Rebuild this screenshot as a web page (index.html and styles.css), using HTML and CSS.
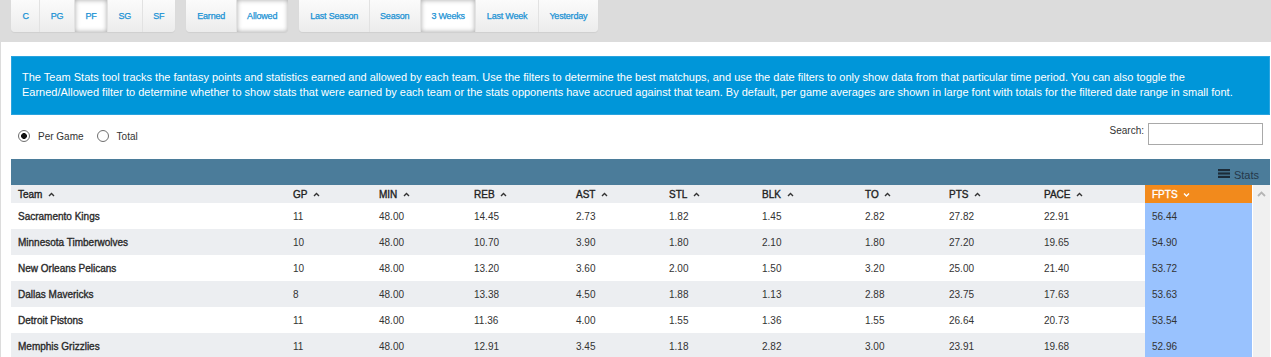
FILE: index.html
```html
<!DOCTYPE html>
<html>
<head>
<meta charset="utf-8">
<link rel="stylesheet" href="styles.css">
</head>
<body>
<div class="topbar">
  <div class="btn-group">
    <span class="btn">C</span><span class="btn">PG</span><span class="btn active">PF</span><span class="btn">SG</span><span class="btn">SF</span>
  </div>
  <div class="btn-group">
    <span class="btn">Earned</span><span class="btn active">Allowed</span>
  </div>
  <div class="btn-group">
    <span class="btn">Last Season</span><span class="btn">Season</span><span class="btn active">3 Weeks</span><span class="btn">Last Week</span><span class="btn">Yesterday</span>
  </div>
</div>
<div class="panel">
  <div class="info">The Team Stats tool tracks the fantasy points and statistics earned and allowed by each team. Use the filters to determine the best matchups, and use the date filters to only show data from that particular time period. You can also toggle the Earned/Allowed filter to determine whether to show stats that were earned by each team or the stats opponents have accrued against that team. By default, per game averages are shown in large font with totals for the filtered date range in small font.</div>
  <div class="controls">
    <div class="radios">
      <label class="radio"><input type="radio" name="mode" checked><span>Per Game</span></label>
      <label class="radio"><input type="radio" name="mode"><span>Total</span></label>
    </div>
    <label class="search"><span>Search:</span><input type="text"></label>
  </div>
  <div class="table-bar">
    <span class="stats-toggle"><svg class="burger" width="12" height="9" viewBox="0 0 12 9"><rect x="0" y="0" width="12" height="2.2"/><rect x="0" y="3.4" width="12" height="2.2"/><rect x="0" y="6.8" width="12" height="2.2"/></svg>Stats</span>
  </div>
  <div class="table-wrap">
    <table class="stats">
      <colgroup>
        <col class="w-team"><col class="w-gp"><col class="w-min"><col class="w-reb"><col class="w-ast"><col class="w-stl"><col class="w-blk"><col class="w-to"><col class="w-pts"><col class="w-pace"><col class="w-fpts">
      </colgroup>
      <thead>
        <tr>
          <th>Team <svg class="caret" width="7" height="5" viewBox="0 0 7 5"><polyline points="1,4 3.5,1.5 6,4"/></svg></th>
          <th>GP <svg class="caret" width="7" height="5" viewBox="0 0 7 5"><polyline points="1,4 3.5,1.5 6,4"/></svg></th>
          <th>MIN <svg class="caret" width="7" height="5" viewBox="0 0 7 5"><polyline points="1,4 3.5,1.5 6,4"/></svg></th>
          <th>REB <svg class="caret" width="7" height="5" viewBox="0 0 7 5"><polyline points="1,4 3.5,1.5 6,4"/></svg></th>
          <th>AST <svg class="caret" width="7" height="5" viewBox="0 0 7 5"><polyline points="1,4 3.5,1.5 6,4"/></svg></th>
          <th>STL <svg class="caret" width="7" height="5" viewBox="0 0 7 5"><polyline points="1,4 3.5,1.5 6,4"/></svg></th>
          <th>BLK <svg class="caret" width="7" height="5" viewBox="0 0 7 5"><polyline points="1,4 3.5,1.5 6,4"/></svg></th>
          <th>TO <svg class="caret" width="7" height="5" viewBox="0 0 7 5"><polyline points="1,4 3.5,1.5 6,4"/></svg></th>
          <th>PTS <svg class="caret" width="7" height="5" viewBox="0 0 7 5"><polyline points="1,4 3.5,1.5 6,4"/></svg></th>
          <th>PACE <svg class="caret" width="7" height="5" viewBox="0 0 7 5"><polyline points="1,4 3.5,1.5 6,4"/></svg></th>
          <th class="sorted">FPTS <svg class="caret" width="7" height="5" viewBox="0 0 7 5"><polyline points="1,1.5 3.5,4 6,1.5"/></svg></th>
        </tr>
      </thead>
      <tbody>
        <tr><td class="team">Sacramento Kings</td><td>11</td><td>48.00</td><td>14.45</td><td>2.73</td><td>1.82</td><td>1.45</td><td>2.82</td><td>27.82</td><td>22.91</td><td class="fpts">56.44</td></tr>
        <tr><td class="team">Minnesota Timberwolves</td><td>10</td><td>48.00</td><td>10.70</td><td>3.90</td><td>1.80</td><td>2.10</td><td>1.80</td><td>27.20</td><td>19.65</td><td class="fpts">54.90</td></tr>
        <tr><td class="team">New Orleans Pelicans</td><td>10</td><td>48.00</td><td>13.20</td><td>3.60</td><td>2.00</td><td>1.50</td><td>3.20</td><td>25.00</td><td>21.40</td><td class="fpts">53.72</td></tr>
        <tr><td class="team">Dallas Mavericks</td><td>8</td><td>48.00</td><td>13.38</td><td>4.50</td><td>1.88</td><td>1.13</td><td>2.88</td><td>23.75</td><td>17.63</td><td class="fpts">53.63</td></tr>
        <tr><td class="team">Detroit Pistons</td><td>11</td><td>48.00</td><td>11.36</td><td>4.00</td><td>1.55</td><td>1.36</td><td>1.55</td><td>26.64</td><td>20.73</td><td class="fpts">53.54</td></tr>
        <tr><td class="team">Memphis Grizzlies</td><td>11</td><td>48.00</td><td>12.91</td><td>3.45</td><td>1.18</td><td>2.82</td><td>3.00</td><td>23.91</td><td>19.68</td><td class="fpts">52.96</td></tr>
      </tbody>
    </table>
    <div class="scrollbar"><svg width="9" height="6" viewBox="0 0 9 6"><polyline points="1,5 4.5,1.5 8,5"/></svg></div>
  </div>
</div>
</body>
</html>
```

FILE: styles.css
```css
* { box-sizing: border-box; }
html, body {
  margin: 0;
  padding: 0;
  background: #dcdcdc;
  font-family: "Liberation Sans", Arial, sans-serif;
  color: #333;
  overflow: hidden;
}
.topbar {
  display: flex;
  gap: 11px;
  height: 42px;
  padding-left: 11px;
}
.btn-group {
  display: flex;
  height: 32px;
  border-radius: 0 0 4px 4px;
  box-shadow: 0 1px 1px rgba(0,0,0,0.06);
  overflow: hidden;
}
.btn {
  display: flex;
  align-items: center;
  justify-content: center;
  padding: 0 10.5px;
  font-size: 9px;
  letter-spacing: -0.2px;
  font-weight: normal;
  -webkit-text-stroke: 0.25px #1a92d4;
  color: #1a92d4;
  background: linear-gradient(#fbfbfb, #ececec);
  border-left: 1px solid #e2e2e2;
}
.btn:first-child { border-left: none; padding-left: 11.5px; }
.btn.active {
  background: #fff;
  box-shadow: inset 0 0 5px rgba(0,0,0,0.35);
}
.panel {
  margin-left: 1px;
  background: #fff;
  padding: 14px 1px 0 10px;
  height: 315px;
}
.info {
  background: #0096d9;
  border: 1px solid #2aa3de;
  color: #fff;
  font-size: 11px;
  line-height: 15px;
  padding: 13px 10px 14px 10px;
}
.controls {
  display: flex;
  justify-content: space-between;
  align-items: flex-start;
  padding-top: 8px;
  height: 44px;
}
.radios {
  display: flex;
  gap: 13px;
  padding: 7px 0 0 7px;
  font-size: 10px;
  color: #333;
}
.radio {
  display: flex;
  align-items: center;
  gap: 8px;
}
.radio input {
  appearance: none;
  -webkit-appearance: none;
  margin: 0;
  width: 12px;
  height: 12px;
  border: 1px solid #6e6e6e;
  border-radius: 50%;
  background: #fff;
}
.radio input:checked {
  background: radial-gradient(circle, #111 0 2.6px, #fff 3.2px);
}
.search {
  display: flex;
  align-items: center;
  gap: 4px;
  font-size: 10px;
  color: #333;
  padding-right: 7px;
}
.search span { margin-top: -8px; }
.search input {
  width: 115px;
  height: 22px;
  margin: 0;
  border: 1px solid #a9a9a9;
}
.table-bar {
  height: 26px;
  background: #4b7c9a;
  display: flex;
  justify-content: flex-end;
  align-items: flex-end;
  padding: 0 11px 4px 0;
}
.stats-toggle {
  display: flex;
  align-items: center;
  gap: 4px;
  font-size: 11px;
  color: #25384a;
}
.burger { fill: #1c2b38; margin-top: -3px; }
.table-wrap {
  display: flex;
  align-items: stretch;
}
.stats {
  width: 1241px;
  table-layout: fixed;
  border-collapse: collapse;
  font-size: 10px;
}
.w-team { width: 275px; }
.w-gp { width: 86px; }
.w-min { width: 95px; }
.w-reb { width: 102px; }
.w-ast { width: 93px; }
.w-stl { width: 93px; }
.w-blk { width: 103px; }
.w-to { width: 84px; }
.w-pts { width: 95px; }
.w-pace { width: 108px; }
.w-fpts { width: 107px; }
.stats th {
  height: 18px;
  padding: 0 7px;
  text-align: left;
  font-weight: normal;
  -webkit-text-stroke: 0.35px #222;
  color: #222;
  background: #eceef1;
  white-space: nowrap;
}
.caret {
  margin-left: 3px;
  vertical-align: 1px;
  fill: none;
  stroke: #333;
  stroke-width: 1.4;
}
.stats th.sorted {
  background: #f28a1c;
  color: #fff;
  -webkit-text-stroke: 0.35px #fff;
}
.stats th.sorted .caret { stroke: #fff; }
.stats td {
  height: 26px;
  padding: 0 7px;
  color: #333;
  white-space: nowrap;
}
.stats tbody tr:nth-child(even) td { background: #eceef1; }
.stats td.team {
  font-weight: normal;
  -webkit-text-stroke: 0.35px #2a2a2a;
  color: #2a2a2a;
}
.stats tbody tr td.fpts { background: #99c2fe; }
.scrollbar {
  margin-left: 1px;
  width: 18px;
  background: #f0f0f0;
  display: flex;
  justify-content: center;
  padding-top: 6px;
}
.scrollbar svg {
  fill: none;
  stroke: #b5b5b5;
  stroke-width: 1.8;
}
```
